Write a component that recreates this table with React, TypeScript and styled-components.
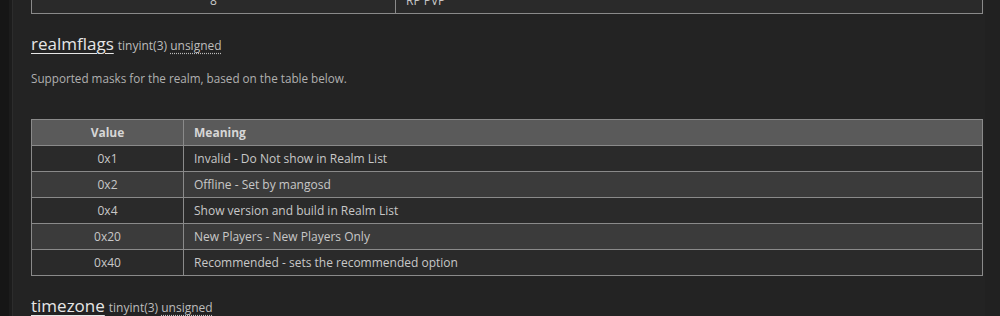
import React from "react";
import styled, { createGlobalStyle } from "styled-components";

interface Flag {
  value: string;
  meaning: string;
}

interface RowProps {
  $alt: boolean;
}

interface ColProps {
  $width?: number;
}

const flags: Flag[] = [
  { value: "0x1", meaning: "Invalid - Do Not show in Realm List" },
  { value: "0x2", meaning: "Offline - Set by mangosd" },
  { value: "0x4", meaning: "Show version and build in Realm List" },
  { value: "0x20", meaning: "New Players - New Players Only" },
  { value: "0x40", meaning: "Recommended - sets the recommended option" },
];

const Global = createGlobalStyle`
  html, body {
    margin: 0;
    padding: 0;
    background: #212121;
    height: 316px;
    overflow: hidden;
  }
  body {
    font-family: "Open Sans", "Noto Sans", sans-serif;
  }
`;

const Page = styled.div`
    display: flex;
    height: 316px;
    overflow: hidden;
  `,
  Rail = styled.div`
    flex: 0 0 9px;
    background: #161616;
  `,
  Gutter = styled.div`
    flex: 0 0 3px;
    background: #1c1c1c;
    border-right: 1px solid #2c2c2c;
  `,
  Main = styled.div`
    flex: 0 0 972px;
    box-sizing: border-box;
    background: #232323;
    padding: 0 2px 0 18px;
    margin-top: -13px;
  `,
  Table = styled.table`
    width: 100%;
    border-collapse: collapse;
    font-size: 12px;
    color: #c8c8c8;
  `,
  Col = styled.col<ColProps>`
    width: ${({ $width }) => ($width ? `${$width}px` : "auto")};
  `,
  Th = styled.th`
    background: #5a5a5a;
    color: #d6d6d6;
    font-weight: 700;
    height: 25px;
    padding: 0 10px;
    border: 1px solid #8a8a8a;
    text-align: left;
    &:first-child {
      text-align: center;
    }
  `,
  Tr = styled.tr<RowProps>`
    background: ${({ $alt }) => ($alt ? "#3b3b3b" : "#2a2a2a")};
  `,
  Td = styled.td`
    height: 25px;
    padding: 0 10px;
    border: 1px solid #8a8a8a;
    &:first-child {
      text-align: center;
    }
  `,
  Heading = styled.h3`
    margin: 18px 0 0;
    font-size: 17px;
    font-weight: 400;
    color: #e6e6e6;
    line-height: 24px;
    white-space: nowrap;
  `,
  Name = styled.span`
    text-decoration: underline;
    text-underline-offset: 3px;
    text-decoration-thickness: 1px;
  `,
  Type = styled.span`
    font-size: 12px;
    color: #bdbdbd;
    margin-left: 4px;
  `,
  Abbr = styled.abbr`
    text-decoration: underline dotted;
    text-underline-offset: 3px;
  `,
  Note = styled.p`
    margin: 12px 0 33px;
    font-size: 11.7px;
    line-height: 16px;
    color: #b0b0b0;
  `;

const ColumnHeading = ({ name }: { name: string }) => (
  <Heading>
    <Name>{name}</Name>
    <Type>
      tinyint(3) <Abbr>unsigned</Abbr>
    </Type>
  </Heading>
);

const App = () => (
  <>
    <Global />
    <Page>
      <Rail />
      <Gutter />
      <Main>
        <Table>
          <colgroup>
            <Col $width={364} />
            <Col />
          </colgroup>
          <tbody>
            <Tr $alt={false}>
              <Td>8</Td>
              <Td>RP PVP</Td>
            </Tr>
          </tbody>
        </Table>

        <ColumnHeading name="realmflags" />
        <Note>Supported masks for the realm, based on the table below.</Note>

        <Table>
          <colgroup>
            <Col $width={152} />
            <Col />
          </colgroup>
          <thead>
            <tr>
              <Th>Value</Th>
              <Th>Meaning</Th>
            </tr>
          </thead>
          <tbody>
            {flags.map((f, i) => (
              <Tr $alt={i % 2 === 1} key={f.value}>
                <Td>{f.value}</Td>
                <Td>{f.meaning}</Td>
              </Tr>
            ))}
          </tbody>
        </Table>

        <ColumnHeading name="timezone" />
      </Main>
    </Page>
  </>
);

export default App;
